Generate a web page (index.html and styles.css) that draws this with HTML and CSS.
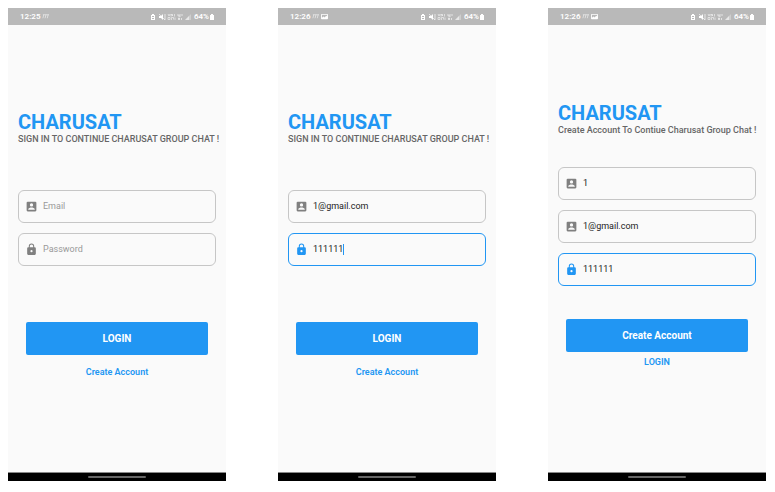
FILE: index.html
```html
<!DOCTYPE html>
<html lang="en">
<head>
<meta charset="utf-8">
<meta name="viewport" content="width=device-width, initial-scale=1">
<title>Charusat Group Chat</title>
<link rel="stylesheet" href="styles.css">
</head>
<body>
<svg class="sprite" aria-hidden="true">
  <symbol id="account" viewBox="0 0 24 24"><path d="M3 5v14a2 2 0 0 0 2 2h14a2 2 0 0 0 2-2V5a2 2 0 0 0-2-2H5a2 2 0 0 0-2 2zm12 4a3 3 0 1 1-6 0 3 3 0 0 1 6 0zm-9 8c0-2 4-3.100 6-3.100s6 1.100 6 3.100v1H6z"/></symbol>
  <symbol id="lock" viewBox="0 0 24 24"><path d="M18 8h-1V6A5 5 0 0 0 7 6v2H6a2 2 0 0 0-2 2v10a2 2 0 0 0 2 2h12a2 2 0 0 0 2-2V10a2 2 0 0 0-2-2zm-6 9a2 2 0 1 1 0-4 2 2 0 0 1 0 4zm3.100-9H8.900V6a3.100 3.100 0 0 1 6.200 0z"/></symbol>
  <symbol id="battery" viewBox="0 0 6 8"><path d="M2 1h2v1h1v5H1V2h1z"/></symbol>
  <symbol id="bars" viewBox="0 0 8 8"><path d="M1 6l1-4M3.500 6l1-4M6 6l1-4M1 2h7" stroke="currentColor" stroke-width=".8" fill="none" opacity=".75"/></symbol>
  <symbol id="photo" viewBox="0 0 8 8"><path fill-rule="evenodd" d="M1 1h6a1 1 0 0 1 1 1v4a1 1 0 0 1-1 1H1a1 1 0 0 1-1-1V2a1 1 0 0 1 1-1zm0 1v3.500l2-1.500 1 1 2-2 1 1V2z"/></symbol>
  <symbol id="status" viewBox="0 0 42 8">
    <path fill-rule="evenodd" d="M0 2h1V1h2v1h1v5H0zm1 1v1h2V3zm0 2v1h2V5z"/>
    <path d="M8 3h2l2-2v6l-2-2H8z"/><path d="M8 1l6 6M14 1v6" stroke="currentColor" stroke-width=".8" fill="none" opacity=".8"/>
    <path d="M17 1l1 2 1-2M20 3.500V1l1.500 2V1M23.500 1v2.500M17 4.500h2v2h-2zM20.500 7V4.500h2v2M24 4.500V7" stroke="currentColor" stroke-width=".7" fill="none" opacity=".75"/>
    <path d="M27 1v2h2M29 1v3M31 1v2M27.500 7V5h1v2M30.500 5v2" stroke="currentColor" stroke-width=".8" fill="none" opacity=".75"/>
    <path d="M40 1v6h-6z" opacity=".3"/><path d="M38 3v4h-4z" opacity=".5"/>
  </symbol>
</svg>
<main class="screens">
  <section class="phone">
    <header class="status"><span>12:25</span><svg class="mini"><use href="#bars"/></svg><span class="spacer"></span><svg class="tray"><use href="#status"/></svg><span>64%</span><svg class="battery"><use href="#battery"/></svg></header>
    <form class="content">
      <h1>CHARUSAT</h1>
      <p>SIGN IN TO CONTINUE CHARUSAT GROUP CHAT !</p>
      <div class="fields">
        <label class="field"><svg><use href="#account"/></svg><input type="text" placeholder="Email" aria-label="Email"></label>
        <label class="field"><svg><use href="#lock"/></svg><input type="text" placeholder="Password" aria-label="Password"></label>
      </div>
      <button type="button">LOGIN</button>
      <a href="#create">Create Account</a>
    </form>
    <footer><span></span></footer>
  </section>
  <section class="phone">
    <header class="status"><span>12:26</span><svg class="mini"><use href="#bars"/></svg><svg class="mini"><use href="#photo"/></svg><span class="spacer"></span><svg class="tray"><use href="#status"/></svg><span>64%</span><svg class="battery"><use href="#battery"/></svg></header>
    <form class="content">
      <h1>CHARUSAT</h1>
      <p>SIGN IN TO CONTINUE CHARUSAT GROUP CHAT !</p>
      <div class="fields">
        <label class="field"><svg><use href="#account"/></svg><input type="text" value="1@gmail.com" aria-label="Email"></label>
        <label class="field active"><svg><use href="#lock"/></svg><input class="fit" type="text" value="111111" aria-label="Password"><span class="caret"></span></label>
      </div>
      <button type="button">LOGIN</button>
      <a href="#create">Create Account</a>
    </form>
    <footer><span></span></footer>
  </section>
  <section class="phone">
    <header class="status"><span>12:26</span><svg class="mini"><use href="#bars"/></svg><svg class="mini"><use href="#photo"/></svg><span class="spacer"></span><svg class="tray"><use href="#status"/></svg><span>64%</span><svg class="battery"><use href="#battery"/></svg></header>
    <form class="content register">
      <h1>CHARUSAT</h1>
      <p>Create Account To Contiue Charusat Group Chat !</p>
      <div class="fields">
        <label class="field"><svg><use href="#account"/></svg><input type="text" value="1" aria-label="Name"></label>
        <label class="field"><svg><use href="#account"/></svg><input type="text" value="1@gmail.com" aria-label="Email"></label>
        <label class="field active"><svg><use href="#lock"/></svg><input type="text" value="111111" aria-label="Password"></label>
      </div>
      <button type="button">Create Account</button>
      <a href="#login">LOGIN</a>
    </form>
    <footer><span></span></footer>
  </section>
</main>
</body>
</html>
```
FILE: styles.css
```css
* { box-sizing: border-box; }
body {
  margin: 0;
  background: #fff;
  font-family: Roboto, "Liberation Sans", sans-serif;
}
.sprite { position: absolute; width: 0; height: 0; }
svg { fill: currentColor; flex: none; }
.screens {
  display: grid;
  grid-template-columns: repeat(3, 1fr);
  gap: 52px;
  padding: 8px 9px 11px 8px;
}
.phone {
  display: flex;
  flex-direction: column;
  min-width: 0;
  min-height: calc(100vh - 19px);
  background: #fafafa;
}
.status {
  display: flex;
  align-items: center;
  height: 17px;
  padding: 0 11px 0 12px;
  background: #b9b9b9;
  color: #fff;
  font-size: 8px;
  font-weight: 600;
}
.spacer { flex: 1; }
.mini { width: 7px; height: 7px; margin-left: 2px; }
.tray { width: 42px; height: 8px; margin-right: 1px; }
.battery { width: 6px; height: 8px; }
.content {
  flex: 1;
  display: flex;
  flex-direction: column;
  padding: 85px 10px 0;
}
h1 {
  margin: 0;
  color: #2196f3;
  font-size: 20px;
  line-height: 24px;
  font-weight: 700;
}
p {
  margin: 0;
  color: #666;
  font-size: 9px;
  line-height: 10px;
  font-weight: 500;
  white-space: nowrap;
}
.fields { display: grid; gap: 10px; margin: 46px 0 56px; }
.field {
  display: flex;
  align-items: center;
  height: 33px;
  padding: 0 6px 1px;
  border: 1px solid #c6c6c6;
  border-radius: 6px;
  color: #222;
}
.field svg { width: 13px; height: 13px; margin-right: 5px; color: #808080; }
.field.active { border-color: #2196f3; }
.field.active svg { color: #2196f3; }
input {
  flex: 1;
  min-width: 0;
  padding: 0;
  border: 0;
  outline: 0;
  background: none;
  color: inherit;
  font: 9px/12px Roboto, "Liberation Sans", sans-serif;
}
input::placeholder { color: #999; opacity: 1; }
.fit { flex: none; field-sizing: content; }
.caret { width: 1px; height: 11px; background: #2196f3; }
button {
  height: 33px;
  margin: 0 8px;
  padding: 0;
  border: 0;
  border-radius: 2px;
  background: #2196f3;
  color: #fff;
  font: 700 10px/12px Roboto, "Liberation Sans", sans-serif;
}
a {
  align-self: center;
  margin-top: 11px;
  color: #2196f3;
  font-size: 9px;
  line-height: 12px;
  font-weight: 600;
  text-decoration: none;
}
.register { padding-top: 76px; }
.register .fields { margin: 32px 0 33px; }
.register a { margin-top: 4px; }
footer {
  display: flex;
  align-items: center;
  justify-content: center;
  height: 9px;
  border-top: 1px solid #888;
  background: #000;
}
footer span { width: 58px; height: 2px; border-radius: 1px; background: #666; }
```
